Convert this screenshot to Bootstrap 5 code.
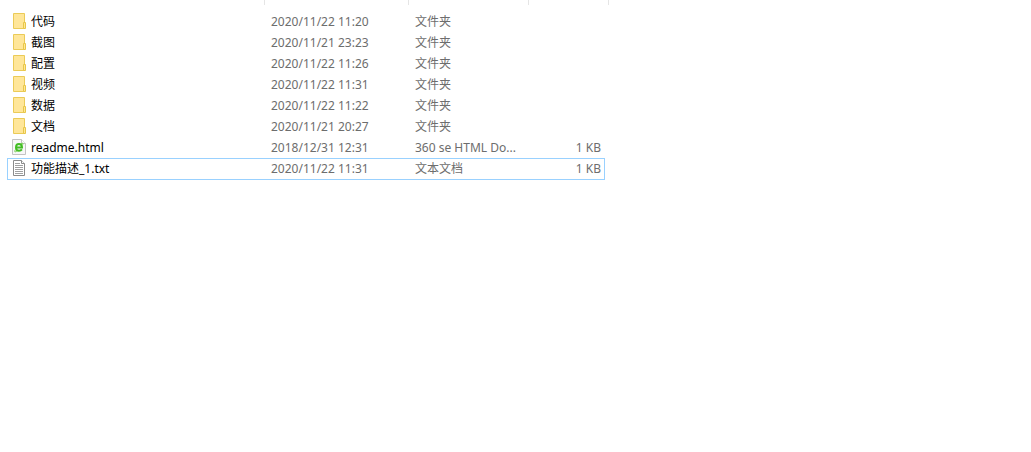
<!DOCTYPE html>
<html lang="zh-CN">
<head>
<meta charset="utf-8">
<meta name="viewport" content="width=device-width, initial-scale=1">
<title>文件</title>
<link href="https://cdn.jsdelivr.net/npm/bootstrap@5.3.0/dist/css/bootstrap.min.css" rel="stylesheet">
<style>
  body { font-family: "Noto Sans", "Noto Sans CJK SC", sans-serif; font-size: 12px; line-height: 20px; color: #000; background: #fff; }
  .file-list { padding-left: 7px; }
  .files { table-layout: fixed; width: 602px; border-collapse: separate; border-spacing: 0; }
  .files th { height: 5px; padding: 0; border-right: 1px solid #e5e5e5; }
  .files th.row-end { border-right: 0; }
  .files tbody::before { content: ""; display: block; height: 6px; }
  .files td { height: 21px; padding: 0 4px 0 6px; line-height: 19px; color: #6d6d6d; vertical-align: top; white-space: nowrap; overflow: hidden; border: 1px solid transparent; border-width: 1px 0; }
  .files td:first-child { padding-left: 5px; color: #000; }
  .file-name { gap: 5px; }
  .file-name svg { margin-top: 1px; }
  .files tr.selected td { height: 22px; border-color: #99d1ff; }
  .files tr.selected td:first-child { border-left-width: 1px; padding-left: 4px; }
  .files tr.selected td:last-child { border-right-width: 1px; padding-right: 3px; }
  .col-name { width: 258px; } .col-date { width: 144px; } .col-type { width: 120px; } .col-size { width: 76px; } .col-rest { width: 4px; }
</style>
</head>
<body>
<svg class="d-none" aria-hidden="true">
  <symbol id="folder" viewBox="0 0 14 16">
    <path d="M1.5 .5H12.5V15.5H1.5Z" fill="#ffe699" stroke="#ebcb57"/>
    <path d="M11.5 15.5V9.5H13.5V15.5Z" fill="#ffe894" stroke="#e8c64a"/>
  </symbol>
  <symbol id="html" viewBox="0 0 14 16">
    <path d="M.5 .5H9.5L13.5 4.5V15.5H.5Z" fill="#f7f7f7" stroke="#c3c3c3"/>
    <path d="M9.5 .5V4.5H13.5" fill="#fff" stroke="#c3c3c3"/>
    <path d="M4 8.5H10C10 6 8.8 5 7 5C5 5 4 6.4 4 8.4C4 10.6 5.2 11.7 7 11.7C8.3 11.7 9.3 11.2 9.9 10.4" fill="none" stroke="#43bd24" stroke-width="2"/>
    <path d="M3 11.2C2 13.3 3.5 13 5 12M9 4.7C11 3.6 11.6 4.4 10.6 5.8" fill="none" stroke="#74d04f"/>
  </symbol>
  <symbol id="text" viewBox="0 0 14 16">
    <path d="M1.5 .5H9.5L12.5 3.5V15.5H1.5Z" fill="#fff" stroke="#8b8b8b"/>
    <path d="M9.5 .5V3.5H12.5" fill="#fff" stroke="#8b8b8b"/>
    <path d="M3 3.5H8M3 5.5H11M3 7.5H11M3 9.5H11M3 11.5H11M3 13.5H11" stroke="#a0a0a0"/>
  </symbol>
</svg>
<main class="file-list">
  <table class="files">
    <colgroup><col class="col-name"><col class="col-date"><col class="col-type"><col class="col-size"><col class="col-rest"></colgroup>
    <thead><tr><th aria-label="名称"></th><th aria-label="修改日期"></th><th aria-label="类型"></th><th class="row-end" aria-label="大小"></th><th></th></tr></thead>
    <tbody>
      <tr><td><div class="file-name d-flex align-items-start"><svg width="14" height="16"><use href="#folder"/></svg>代码</div></td><td>2020/11/22 11:20</td><td>文件夹</td><td></td></tr>
      <tr><td><div class="file-name d-flex align-items-start"><svg width="14" height="16"><use href="#folder"/></svg>截图</div></td><td>2020/11/21 23:23</td><td>文件夹</td><td></td></tr>
      <tr><td><div class="file-name d-flex align-items-start"><svg width="14" height="16"><use href="#folder"/></svg>配置</div></td><td>2020/11/22 11:26</td><td>文件夹</td><td></td></tr>
      <tr><td><div class="file-name d-flex align-items-start"><svg width="14" height="16"><use href="#folder"/></svg>视频</div></td><td>2020/11/22 11:31</td><td>文件夹</td><td></td></tr>
      <tr><td><div class="file-name d-flex align-items-start"><svg width="14" height="16"><use href="#folder"/></svg>数据</div></td><td>2020/11/22 11:22</td><td>文件夹</td><td></td></tr>
      <tr><td><div class="file-name d-flex align-items-start"><svg width="14" height="16"><use href="#folder"/></svg>文档</div></td><td>2020/11/21 20:27</td><td>文件夹</td><td></td></tr>
      <tr><td><div class="file-name d-flex align-items-start"><svg width="14" height="16"><use href="#html"/></svg>readme.html</div></td><td>2018/12/31 12:31</td><td>360 se HTML Do...</td><td class="text-end">1 KB</td></tr>
      <tr class="selected"><td><div class="file-name d-flex align-items-start"><svg width="14" height="16"><use href="#text"/></svg>功能描述_1.txt</div></td><td>2020/11/22 11:31</td><td>文本文档</td><td class="text-end">1 KB</td></tr>
    </tbody>
  </table>
</main>
<script src="https://cdn.jsdelivr.net/npm/bootstrap@5.3.0/dist/js/bootstrap.bundle.min.js"></script>
</body>
</html>
